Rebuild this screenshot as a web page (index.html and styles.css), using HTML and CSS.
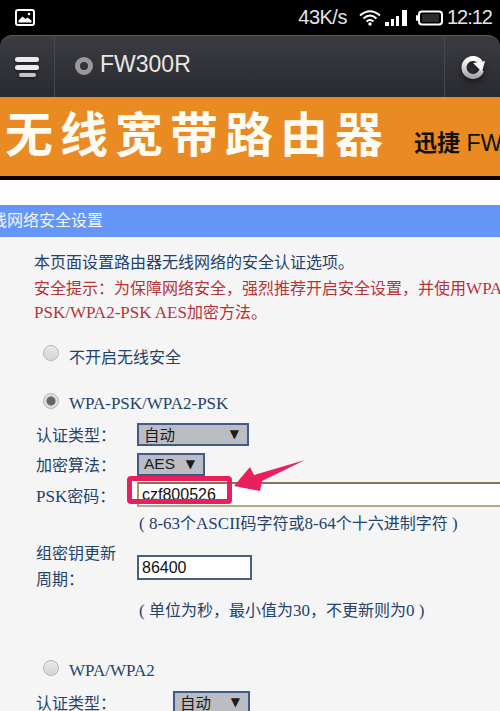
FILE: index.html
```html
<!DOCTYPE html>
<html lang="zh-CN">
<head>
  <meta charset="UTF-8">
  <meta name="viewport" content="width=device-width, initial-scale=1.0">
  <title>FW300R</title>
  <link rel="stylesheet" href="styles.css">
</head>
<body>
  <div class="screen">
    <!-- status bar -->
    <div class="status-bar">
      <svg class="pic-icon" width="20" height="17" viewBox="0 0 20 17">
        <rect x="1" y="1" width="18" height="15" rx="2" fill="none" stroke="#fff" stroke-width="2"/>
        <path d="M3.5 13.5v-2l4-4 3 2.500 2-1.500 4 3v2z" fill="#fff"/>
        <circle cx="14" cy="5" r="1.300" fill="#fff"/>
      </svg>
      <div class="status-right">
        <span class="speed">43K/s</span>
        <svg class="wifi" width="22" height="17" viewBox="0 0 22 17">
          <path d="M1 6.500Q11 -2 21 6.500M4.500 9.500Q11 3.500 17.500 9.500M7.500 12.500Q11 9.500 14.500 12.500" fill="none" stroke="#fff" stroke-width="2"/>
          <circle cx="11" cy="15" r="1.700" fill="#fff"/>
        </svg>
        <svg class="signal" width="23" height="16" viewBox="0 0 23 16">
          <rect x="0" y="12" width="4" height="4" fill="#fff"/>
          <rect x="6" y="9" width="3" height="7" fill="#fff"/>
          <rect x="11" y="6" width="3" height="10" fill="#fff"/>
          <rect x="17" y="0" width="5" height="16" fill="#fff"/>
        </svg>
        <svg class="battery" width="27" height="16" viewBox="0 0 27 16">
          <rect x="3" y="1.500" width="23" height="13" rx="3" fill="none" stroke="#fff" stroke-width="2"/>
          <rect x="0" y="5" width="2" height="6" rx="1" fill="#fff"/>
          <rect x="6" y="4" width="17" height="8" fill="#2a2a2a"/>
        </svg>
        <span class="clock">12:12</span>
      </div>
    </div>

    <!-- browser bar -->
    <div class="nav-bar">
      <div class="nav-btn menu-btn">
        <span class="menu-line"></span>
        <span class="menu-line"></span>
        <span class="menu-line short"></span>
      </div>
      <div class="nav-title">
        <span class="site-dot"></span>
        <span>FW300R</span>
      </div>
      <div class="nav-btn reload-btn">
        <svg class="reload-icon" width="26" height="26" viewBox="0 0 26 26">
          <defs>
            <linearGradient id="ringFill" x1="0" y1="0" x2="0" y2="1">
              <stop offset="0" stop-color="#ffffff"/>
              <stop offset="1" stop-color="#a8a8a8"/>
            </linearGradient>
          </defs>
          <path d="M20.500 8.500A9 9 0 1 0 21.500 16.500" fill="none" stroke="url(#ringFill)" stroke-width="5"/>
          <polygon points="13,9 25,7 22,18" fill="#f4f4f4"/>
        </svg>
      </div>
    </div>

    <!-- orange banner -->
    <div class="banner">
      <span class="banner-title">无线宽带路由器</span>
      <span class="banner-sub"><b>迅捷</b> FW300R</span>
    </div>
    <div class="white-gap"></div>

    <div class="section-title"><span>无线网络安全设置</span></div>

    <div class="content">
      <p class="intro">本页面设置路由器无线网络的安全认证选项。</p>
      <p class="warning">安全提示<span class="pt">：</span>为保障网络安全<span class="pt">，</span>强烈推荐开启安全设置<span class="pt">，</span>并使用<span class="en">WPA-</span><br><span class="en">PSK/WPA2-PSK AES</span>加密方法。</p>

      <div class="radio-row first">
        <span class="radio"></span>
        <span>不开启无线安全</span>
      </div>

      <div class="radio-row second">
        <span class="radio checked"></span>
        <span class="en">WPA-PSK/WPA2-PSK</span>
      </div>

      <div class="form-row auth-row">
        <label class="field-label">认证类型<span class="pt">：</span></label>
        <div class="select wide"><span>自动</span><span class="arrow">▼</span></div>
      </div>
      <div class="form-row cipher-row">
        <label class="field-label">加密算法<span class="pt">：</span></label>
        <div class="select narrow"><span>AES</span><span class="arrow">▼</span></div>
      </div>
      <div class="form-row psk-row">
        <label class="field-label"><span class="en">PSK</span>密码<span class="pt">：</span></label>
        <div class="psk-input">czf800526</div>
      </div>
      <p class="hint psk-hint"><span class="en">( 8-63</span>个<span class="en">ASCII</span>码字符或<span class="en">8-64</span>个十六进制字符<span class="en"> )</span></p>
      <div class="form-row group-row">
        <label class="field-label two-line">组密钥更新<br>周期<span class="pt">：</span></label>
        <div class="text-input">86400</div>
      </div>
      <p class="hint period-hint"><span class="en">( </span>单位为秒<span class="pt">，</span>最小值为<span class="en">30</span><span class="pt">，</span>不更新则为<span class="en">0 )</span></p>

      <div class="radio-row third">
        <span class="radio"></span>
        <span class="en">WPA/WPA2</span>
      </div>
      <div class="form-row auth2-row">
        <label class="field-label long">认证类型<span class="pt">：</span></label>
        <div class="select small"><span>自动</span><span class="arrow">▼</span></div>
      </div>
      <div class="form-row next-row">
        <label class="field-label long"></label>
        <div class="select next"></div>
      </div>
    </div>

    <!-- red annotation over the password field -->
    <div class="mark-box"></div>
    <svg class="mark-arrow" width="80" height="36" viewBox="0 0 80 36">
      <polygon points="4,28 20,9 24,17 75,2 32,23 30,33" fill="#ea1f5e"/>
    </svg>
  </div>
</body>
</html>
```

FILE: styles.css
```css
* {
  box-sizing: border-box;
}
html, body {
  margin: 0;
  padding: 0;
  background: #000;
}
.screen {
  position: relative;
  width: 500px;
  height: 711px;
  overflow: hidden;
  display: flex;
  flex-direction: column;
  background: #000;
  font-family: "Liberation Serif", "Noto Sans CJK SC", serif;
  font-size: 16px;
  color: #25426a;
}
.en {
  font-size: 17px;
}
.pt {
  font-family: "Noto Sans CJK TC", sans-serif;
}

/* status bar */
.status-bar {
  height: 35px;
  flex: none;
  display: flex;
  align-items: center;
  justify-content: space-between;
  padding: 0 8px 0 15px;
  font-family: "Liberation Sans", sans-serif;
  color: #e4e4e4;
  font-size: 20px;
}
.status-right {
  display: flex;
  align-items: center;
}
.speed {
  margin-right: 12px;
  letter-spacing: -0.5px;
}
.wifi {
  margin-right: 4px;
}
.signal {
  margin-right: 8px;
}
.battery {
  margin-right: 4px;
}
.clock {
  letter-spacing: -1px;
}

/* browser bar */
.nav-bar {
  height: 62px;
  flex: none;
  display: flex;
  background: linear-gradient(#3b3c42, #2a2b30);
  border-top: 1px solid #5a5b60;
  border-radius: 12px 12px 0 0;
}
.nav-btn {
  width: 55px;
  flex: none;
  display: flex;
  flex-direction: column;
  align-items: center;
  justify-content: center;
  gap: 3px;
}
.menu-btn {
  border-right: 1px solid #47484d;
}
.reload-btn {
  width: 56px;
  border-left: 1px solid #47484d;
}
.reload-icon {
  filter: drop-shadow(0 3px 3px rgba(0,0,0,0.6));
}
.menu-line {
  width: 24px;
  height: 5px;
  border-radius: 3px;
  background: #ececec;
  box-shadow: 0 2px 3px rgba(0,0,0,0.4);
}
.menu-line.short {
  width: 17px;
  height: 4px;
  background: #c4c4c4;
}
.nav-title {
  flex: 1;
  display: flex;
  align-items: center;
  padding: 0 0 4px 20px;
  gap: 7px;
  font-family: "Liberation Sans", sans-serif;
  font-size: 23px;
  color: #e8e8e8;
}
.site-dot {
  width: 18px;
  height: 18px;
  margin-top: 2px;
  border-radius: 50%;
  border: 5px solid #9a9a9a;
  background: #34353a;
}

/* banner */
.banner {
  height: 83px;
  flex: none;
  background: #e98a22;
  border-bottom: 4px solid #0c0400;
  display: flex;
  align-items: center;
  white-space: nowrap;
  font-family: "Liberation Sans", "Noto Sans CJK SC", sans-serif;
  color: #000;
  padding-left: 5px;
}
.banner-title {
  font-size: 48px;
  font-weight: 700;
  letter-spacing: 7px;
  color: #fdfbf2;
  line-height: 60px;
  margin-top: -2px;
}
.banner-sub {
  font-size: 23px;
  margin-left: 24px;
  margin-top: 8px;
  color: #111;
}
.white-gap {
  height: 25px;
  flex: none;
  background: #fff;
}
.section-title {
  height: 32px;
  flex: none;
  background: #6495f7;
  color: #f2f5fb;
  line-height: 32px;
  overflow: hidden;
  white-space: nowrap;
  font-family: "Liberation Sans", "Noto Sans CJK SC", sans-serif;
}
.section-title span {
  margin-left: -25px;
}

/* form */
.content {
  flex: 1;
  background: #f5f5f6;
  padding: 14px 0 0 34px;
  white-space: nowrap;
}
.intro, .warning, .hint {
  margin: 0;
  line-height: 24px;
}
.warning {
  color: #b5333a;
}
.radio-row {
  display: flex;
  align-items: center;
  height: 24px;
  padding-left: 9px;
  gap: 10px;
}
.radio-row.first {
  margin-top: 19px;
}
.radio-row.second {
  margin-top: 24px;
}
.radio-row.third {
  margin-top: 36px;
}
.radio {
  width: 16px;
  height: 16px;
  margin-top: -7px;
  border-radius: 50%;
  border: 1px solid #b4b4b4;
  background: linear-gradient(#e8e8e8, #d4d4d4);
  box-shadow: inset 0 0 1px #fff;
}
.radio.checked {
  background: radial-gradient(circle, #666 0 4px, #dcdcdc 5px);
}
.form-row {
  display: flex;
  align-items: center;
  padding-left: 2px;
}
.field-label {
  width: 101px;
  flex: none;
}
.field-label.long {
  width: 137px;
}
.field-label.two-line {
  line-height: 24px;
}
.auth-row {
  margin-top: 6px;
}
.cipher-row {
  margin-top: 6px;
}
.psk-row {
  margin-top: 6px;
}
.group-row {
  margin-top: 6px;
}
.auth2-row {
  margin-top: 7px;
}
.next-row {
  margin-top: 5px;
}
.select {
  height: 23px;
  border: 2px solid #3f5a8c;
  background: #bcbdc2;
  color: #1c1c1c;
  display: flex;
  align-items: center;
  justify-content: space-between;
  padding: 0 8px 0 5px;
  font-family: "Liberation Sans", "Noto Sans CJK SC", sans-serif;
  font-size: 15.5px;
}
.select.wide {
  width: 112px;
}
.select.narrow {
  width: 68px;
}
.select.small {
  width: 77px;
}
.select.next {
  width: 68px;
}
.arrow {
  font-size: 12px;
  font-family: "DejaVu Sans", sans-serif;
}
.psk-input {
  flex: 1;
  height: 25px;
  line-height: 21px;
  padding-left: 3px;
  background: #fff;
  border-top: 2px solid #8a7450;
  border-bottom: 2px solid #b8a888;
  border-left: 2px solid #b09a60;
  box-shadow: -5px 0 0 #fff;
  color: #111;
  font-family: "Liberation Sans", sans-serif;
}
.text-input {
  width: 115px;
  height: 25px;
  line-height: 21px;
  padding-left: 3px;
  background: #fff;
  border: 2px solid #47607f;
  color: #111;
  font-family: "Liberation Sans", sans-serif;
}
.hint {
  padding-left: 105px;
}
.psk-hint {
  margin-top: 5px;
}
.period-hint {
  margin-top: 5px;
}

/* annotation */
.mark-box {
  position: absolute;
  left: 127px;
  top: 476px;
  width: 105px;
  height: 28px;
  border: 5px solid #e81f5c;
  border-radius: 4px;
}
.mark-arrow {
  position: absolute;
  left: 230px;
  top: 458px;
}
```
